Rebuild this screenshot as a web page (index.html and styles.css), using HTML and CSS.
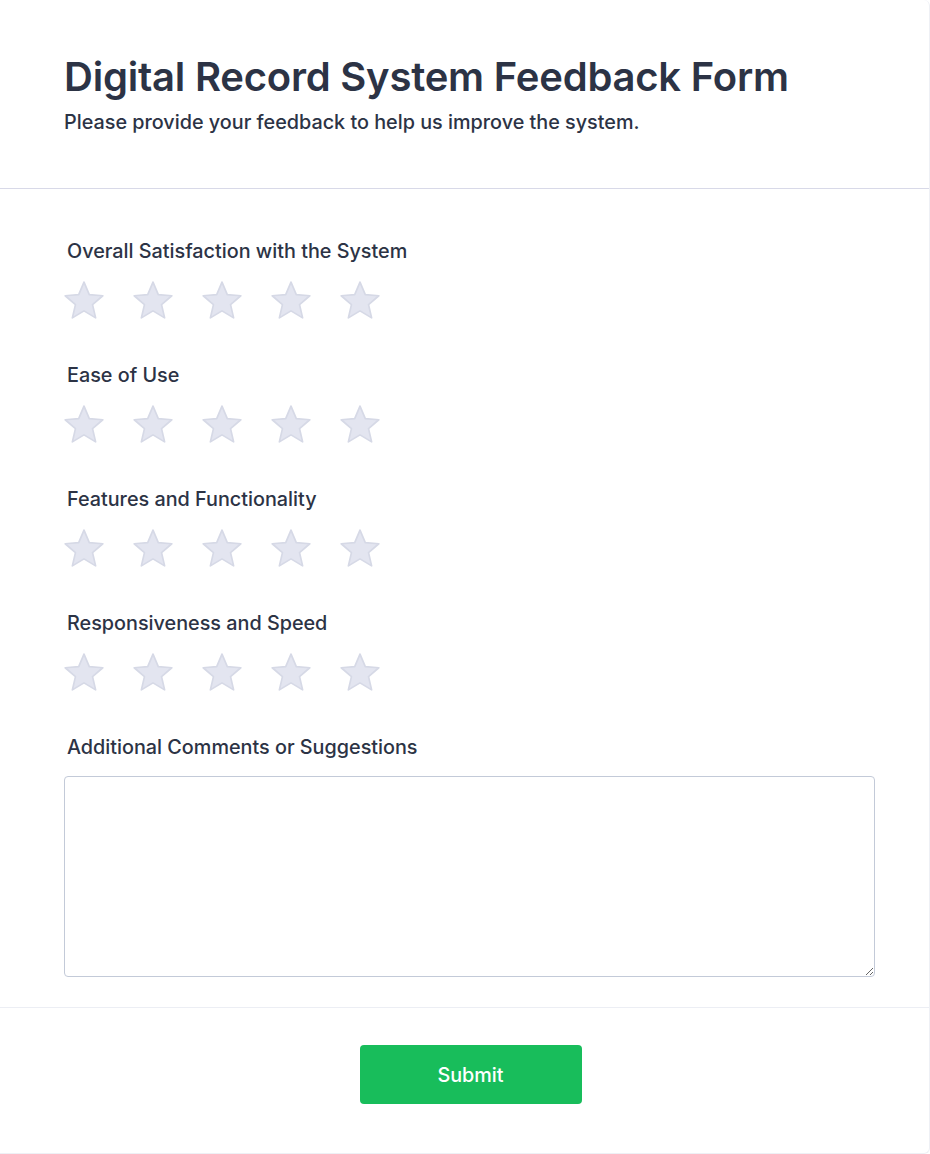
FILE: index.html
```html
<!DOCTYPE html>
<html lang="en">
<head>
<meta charset="utf-8">
<title>Digital Record System Feedback Form</title>
<link rel="stylesheet" href="styles.css">
</head>
<body>
<div class="card">
  <header class="header">
    <h1 class="title">Digital Record System Feedback Form</h1>
    <p class="subtitle">Please provide your feedback to help us improve the system.</p>
  </header>
  <form class="body">
    <div class="field">
      <label class="label">Overall Satisfaction with the System</label>
      <div class="stars">
        <svg class="star" viewBox="1.4 1.4 21.2 20.2"><path d="M12 17.27L18.18 21l-1.64-7.03L22 9.24l-7.19-.61L12 2 9.19 8.63 2 9.24l5.46 4.73L5.82 21z"/></svg>
        <svg class="star" viewBox="1.4 1.4 21.2 20.2"><path d="M12 17.27L18.18 21l-1.64-7.03L22 9.24l-7.19-.61L12 2 9.19 8.63 2 9.24l5.46 4.73L5.82 21z"/></svg>
        <svg class="star" viewBox="1.4 1.4 21.2 20.2"><path d="M12 17.27L18.18 21l-1.64-7.03L22 9.24l-7.19-.61L12 2 9.19 8.63 2 9.24l5.46 4.73L5.82 21z"/></svg>
        <svg class="star" viewBox="1.4 1.4 21.2 20.2"><path d="M12 17.27L18.18 21l-1.64-7.03L22 9.24l-7.19-.61L12 2 9.19 8.63 2 9.24l5.46 4.73L5.82 21z"/></svg>
        <svg class="star" viewBox="1.4 1.4 21.2 20.2"><path d="M12 17.27L18.18 21l-1.64-7.03L22 9.24l-7.19-.61L12 2 9.19 8.63 2 9.24l5.46 4.73L5.82 21z"/></svg>
      </div>
    </div>
    <div class="field">
      <label class="label">Ease of Use</label>
      <div class="stars">
        <svg class="star" viewBox="1.4 1.4 21.2 20.2"><path d="M12 17.27L18.18 21l-1.64-7.03L22 9.24l-7.19-.61L12 2 9.19 8.63 2 9.24l5.46 4.73L5.82 21z"/></svg>
        <svg class="star" viewBox="1.4 1.4 21.2 20.2"><path d="M12 17.27L18.18 21l-1.64-7.03L22 9.24l-7.19-.61L12 2 9.19 8.63 2 9.24l5.46 4.73L5.82 21z"/></svg>
        <svg class="star" viewBox="1.4 1.4 21.2 20.2"><path d="M12 17.27L18.18 21l-1.64-7.03L22 9.24l-7.19-.61L12 2 9.19 8.63 2 9.24l5.46 4.73L5.82 21z"/></svg>
        <svg class="star" viewBox="1.4 1.4 21.2 20.2"><path d="M12 17.27L18.18 21l-1.64-7.03L22 9.24l-7.19-.61L12 2 9.19 8.63 2 9.24l5.46 4.73L5.82 21z"/></svg>
        <svg class="star" viewBox="1.4 1.4 21.2 20.2"><path d="M12 17.27L18.18 21l-1.64-7.03L22 9.24l-7.19-.61L12 2 9.19 8.63 2 9.24l5.46 4.73L5.82 21z"/></svg>
      </div>
    </div>
    <div class="field">
      <label class="label">Features and Functionality</label>
      <div class="stars">
        <svg class="star" viewBox="1.4 1.4 21.2 20.2"><path d="M12 17.27L18.18 21l-1.64-7.03L22 9.24l-7.19-.61L12 2 9.19 8.63 2 9.24l5.46 4.73L5.82 21z"/></svg>
        <svg class="star" viewBox="1.4 1.4 21.2 20.2"><path d="M12 17.27L18.18 21l-1.64-7.03L22 9.24l-7.19-.61L12 2 9.19 8.63 2 9.24l5.46 4.73L5.82 21z"/></svg>
        <svg class="star" viewBox="1.4 1.4 21.2 20.2"><path d="M12 17.27L18.18 21l-1.64-7.03L22 9.24l-7.19-.61L12 2 9.19 8.63 2 9.24l5.46 4.73L5.82 21z"/></svg>
        <svg class="star" viewBox="1.4 1.4 21.2 20.2"><path d="M12 17.27L18.18 21l-1.64-7.03L22 9.24l-7.19-.61L12 2 9.19 8.63 2 9.24l5.46 4.73L5.82 21z"/></svg>
        <svg class="star" viewBox="1.4 1.4 21.2 20.2"><path d="M12 17.27L18.18 21l-1.64-7.03L22 9.24l-7.19-.61L12 2 9.19 8.63 2 9.24l5.46 4.73L5.82 21z"/></svg>
      </div>
    </div>
    <div class="field">
      <label class="label">Responsiveness and Speed</label>
      <div class="stars">
        <svg class="star" viewBox="1.4 1.4 21.2 20.2"><path d="M12 17.27L18.18 21l-1.64-7.03L22 9.24l-7.19-.61L12 2 9.19 8.63 2 9.24l5.46 4.73L5.82 21z"/></svg>
        <svg class="star" viewBox="1.4 1.4 21.2 20.2"><path d="M12 17.27L18.18 21l-1.64-7.03L22 9.24l-7.19-.61L12 2 9.19 8.63 2 9.24l5.46 4.73L5.82 21z"/></svg>
        <svg class="star" viewBox="1.4 1.4 21.2 20.2"><path d="M12 17.27L18.18 21l-1.64-7.03L22 9.24l-7.19-.61L12 2 9.19 8.63 2 9.24l5.46 4.73L5.82 21z"/></svg>
        <svg class="star" viewBox="1.4 1.4 21.2 20.2"><path d="M12 17.27L18.18 21l-1.64-7.03L22 9.24l-7.19-.61L12 2 9.19 8.63 2 9.24l5.46 4.73L5.82 21z"/></svg>
        <svg class="star" viewBox="1.4 1.4 21.2 20.2"><path d="M12 17.27L18.18 21l-1.64-7.03L22 9.24l-7.19-.61L12 2 9.19 8.63 2 9.24l5.46 4.73L5.82 21z"/></svg>
      </div>
    </div>
    <div class="field field-last">
      <label class="label" for="comments">Additional Comments or Suggestions</label>
      <textarea id="comments" class="textarea"></textarea>
    </div>
  </form>
  <footer class="footer">
    <button type="button" class="submit">Submit</button>
  </footer>
</div>
</body>
</html>
```

FILE: styles.css
```css
* { box-sizing: border-box; }
html, body { margin: 0; padding: 0; background: #ffffff; }
body {
  font-family: Inter, "Noto Sans", "Liberation Sans", sans-serif;
  color: #2c3345;
}
.card {
  width: 930px;
  min-height: 1154px;
  background: #fff;
  border-right: 1px solid #eef0f5;
  border-bottom: 1px solid #eef0f5;
  border-radius: 0 6px 6px 0;
}
.header {
  padding: 53px 64px 0;
  height: 189px;
  border-bottom: 1px solid #d8d9e8;
}
.title {
  margin: 0;
  font-size: 40px;
  font-weight: 600;
  line-height: 48px;
  letter-spacing: -0.22px;
  color: #2c3345;
}
.subtitle {
  margin: 9px 0 0;
  font-size: 19.8px;
  font-weight: 500;
  line-height: 24px;
  color: #2c3345;
}
.body {
  padding: 50px 55px 30px 64px;
  border-bottom: 1px solid #eceef4;
}
.field {
  display: flex;
  flex-direction: column;
  height: 124px;
}
.field-last { height: auto; }
.label {
  display: block;
  padding-left: 3px;
  font-size: 19.8px;
  font-weight: 500;
  line-height: 24px;
  color: #2c3345;
}
.stars {
  display: flex;
  gap: 29px;
  margin-top: 18px;
}
.star {
  width: 40px;
  height: 38px;
  fill: #e3e5f0;
  stroke: #d6d9e6;
  stroke-width: 0.9;
  stroke-linejoin: round;
}
.textarea {
  display: block;
  margin-top: 17px;
  width: 811px;
  height: 201px;
  border: 1px solid #c3cad8;
  border-radius: 4px;
  resize: vertical;
  font-family: inherit;
  font-size: 16px;
}
.footer {
  display: flex;
  justify-content: center;
  padding-top: 37px;
  padding-left: 12px;
}
.submit {
  width: 222px;
  height: 59px;
  background: #18bd5b;
  color: #fff;
  border: none;
  border-radius: 4px;
  font-family: inherit;
  font-size: 19.8px;
  font-weight: 500;
}
```
